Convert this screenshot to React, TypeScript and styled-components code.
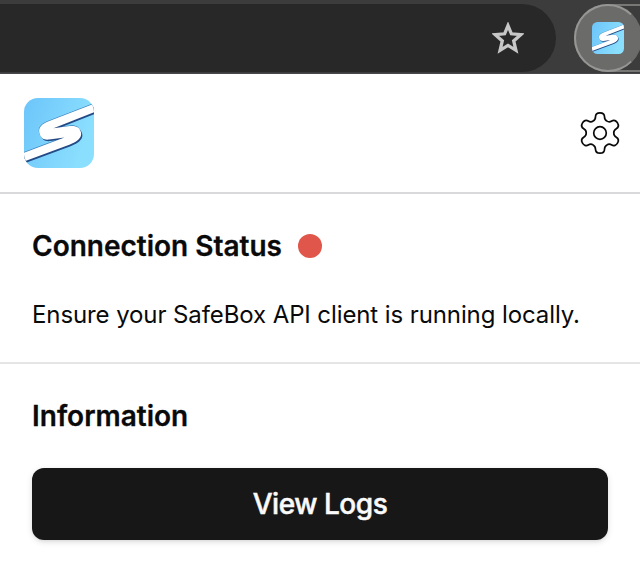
import React, { useId } from 'react';
import styled, { createGlobalStyle } from 'styled-components';

const GlobalStyle = createGlobalStyle`
  *, *::before, *::after { box-sizing: border-box; }
  body {
    margin: 0;
    background: #fff;
    color: #0a0a0a;
    font-family: Inter, "Liberation Sans", sans-serif;
    overflow: hidden;
  }
  h2, p { margin: 0; }
`;

const Page = styled.div`
  width: 640px;
  height: 572px;
  overflow: hidden;
  background: #fff;
`;

const BrowserBar = styled.div`
  display: flex;
  gap: 18px;
  height: 74px;
  padding-top: 4px;
  background: #3c3c3c;
  border-bottom: 1px solid #48474a;
  overflow: hidden;
`;

const AddressField = styled.div`
  display: flex;
  flex: none;
  align-items: center;
  justify-content: flex-end;
  width: 556px;
  height: 68px;
  padding-right: 32px;
  border-radius: 0 34px 34px 0;
  background: #282828;
`;

const ExtensionPill = styled.div`
  flex: none;
  width: 140px;
  height: 68px;
  border: 2px solid #777775;
  border-radius: 34px;
`;

const ExtensionButton = styled.div`
  display: flex;
  align-items: center;
  justify-content: center;
  width: 68px;
  height: 68px;
  margin: -2px;
  border: 2px solid #969694;
  border-right-color: #6b6b69;
  border-radius: 50%;
  background: #6b6b69;
`;

const Header = styled.header`
  display: flex;
  align-items: center;
  justify-content: space-between;
  height: 120px;
  padding: 0 20px 0 24px;
  border-bottom: 2px solid #d9d9db;
`;

const Section = styled.section<{ $divided?: boolean }>`
  height: ${(p) => (p.$divided ? '170px' : '208px')};
  padding: 32px 32px 0;
  border-bottom: ${(p) => (p.$divided ? '2px solid #e5e5e5' : 'none')};
`;

const TitleRow = styled.div`
  display: flex;
  align-items: center;
  gap: 16px;
  height: 40px;
`;

const Title = styled.h2`
  font-size: 28px;
  line-height: 40px;
  font-weight: 600;
  -webkit-text-stroke: 0.3px currentColor;
  white-space: nowrap;
`;

const StatusDot = styled.span`
  width: 24px;
  height: 24px;
  border-radius: 50%;
  background: #e0564a;
`;

const Message = styled.p`
  margin-top: 33px;
  font-size: 24px;
  line-height: 32px;
  letter-spacing: -0.1px;
  white-space: nowrap;
`;

const LogsButton = styled.button`
  display: block;
  width: 100%;
  height: 72px;
  margin-top: 32px;
  padding: 0;
  border: 0;
  border-radius: 12px;
  background: #171717;
  color: #fafafa;
  font: 500 28px/40px Inter, "Liberation Sans", sans-serif;
  letter-spacing: -0.45px;
  -webkit-text-stroke: 0.5px currentColor;
  box-shadow: 0 2px 6px rgba(0, 0, 0, 0.12), 0 2px 4px -2px rgba(0, 0, 0, 0.1);
`;

const Icon = styled.svg`
  display: block;
  flex: none;
`;

const S_SHAPE =
  'M72 4.9 L24 23.6 C17 26.4 14.4 30.5 15.3 34.5 C16.4 39.8 19.5 42.2 25 41.6 L40.5 39.4 L-2 55.6 V64.2 L46 46.4 C54 43.4 58 39.2 57 34.6 C56 29.4 52.4 27.4 46 28 L29.5 30.2 L72 13.4 Z';

function Logo({ size, radius }: { size: number; radius: number }) {
  const id = useId();
  return (
    <Icon width={size} height={size} viewBox="0 0 70 70">
      <defs>
        <linearGradient id={`${id}g`} x1="0" y1="0" x2="1" y2="0.35">
          <stop offset="0" stopColor="#6cc5fa" />
          <stop offset="1" stopColor="#8bdffe" />
        </linearGradient>
        <clipPath id={`${id}c`}>
          <rect width="70" height="70" rx={radius} />
        </clipPath>
      </defs>
      <g clipPath={`url(#${id}c)`}>
        <rect width="70" height="70" fill={`url(#${id}g)`} />
        <path d={S_SHAPE} fill="#3f82bd" transform="translate(-.4 -.6)" />
        <path d={S_SHAPE} fill="#244a86" transform="translate(1.2 1.5)" />
        <path d={S_SHAPE} fill="#fff" />
      </g>
    </Icon>
  );
}

// One tooth of the gear, pointing up, as cubic segments around the origin.
const TOOTH = [
  [-5.6, -12.6], [-4.5, -14.2], [-4.5, -16.2],
  [-4.5, -18.7], [-2.5, -20.2], [0, -20.2],
  [2.5, -20.2], [4.5, -18.7], [4.5, -16.2],
  [4.5, -14.2], [5.6, -12.6], [6.9, -11.9],
];

function gearPath(): string {
  let d = 'M-6.9 -11.9';
  for (let i = 0; i < 6; i += 1) {
    const a = (i * Math.PI) / 3;
    const pts = TOOTH.map(([x, y]) =>
      `${(x * Math.cos(a) - y * Math.sin(a)).toFixed(2)} ${(x * Math.sin(a) + y * Math.cos(a)).toFixed(2)}`,
    );
    for (let j = 0; j < pts.length; j += 3) d += `C${pts.slice(j, j + 3).join(' ')}`;
  }
  return `${d}Z`;
}

const GEAR = gearPath();

export default function App() {
  return (
    <>
      <GlobalStyle />
      <Page>
        <BrowserBar>
          <AddressField>
            <Icon width="32" height="32" viewBox="0 0 32 32" fill="none">
              <path
                d="M16 3.6 L19.4 11.8 L28.8 12.7 L21.7 18.9 L23.9 28.3 L16 23.4 L8.1 28.3 L10.3 18.9 L3.2 12.7 L12.6 11.8 Z"
                stroke="#c7c7c7"
                strokeWidth="3.3"
              />
            </Icon>
          </AddressField>
          <ExtensionPill>
            <ExtensionButton>
              <Logo size={32} radius={12} />
            </ExtensionButton>
          </ExtensionPill>
        </BrowserBar>
        <Header>
          <Logo size={70} radius={14} />
          <Icon width="40" height="44" viewBox="-20 -22 40 44" fill="none" stroke="#0a0a0a" strokeWidth="1.7" overflow="visible">
            <path d={GEAR} />
            <circle r="6.3" />
          </Icon>
        </Header>
        <Section $divided>
          <TitleRow>
            <Title>Connection Status</Title>
            <StatusDot />
          </TitleRow>
          <Message>Ensure your SafeBox API client is running locally.</Message>
        </Section>
        <Section>
          <Title>Information</Title>
          <LogsButton>View Logs</LogsButton>
        </Section>
      </Page>
    </>
  );
}
